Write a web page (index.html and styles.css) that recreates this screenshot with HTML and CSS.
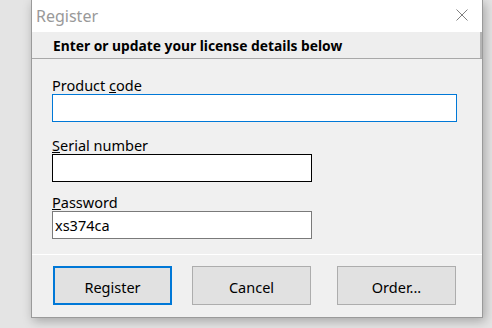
FILE: index.html
```html
<!DOCTYPE html>
<html lang="en">
<head>
    <meta charset="UTF-8">
    <title>Register</title>
    <link rel="stylesheet" href="styles.css">
</head>
<body>
    <div class="window">
        <div class="titlebar">
            <span class="title">Register</span>
            <svg class="close" width="12" height="12" viewBox="0 0 12 12">
                <path d="M0.5 0.5 L11.5 11.5 M11.5 0.5 L0.5 11.5" stroke="#808080" stroke-width="1" fill="none"/>
            </svg>
        </div>

        <div class="header">Enter or update your license details below</div>

        <div class="content">
            <div class="field field-product">
                <label for="productCode">Product <u>c</u>ode</label>
                <input type="text" id="productCode" class="focused">
            </div>
            <div class="field field-serial">
                <label for="serialNumber"><u>S</u>erial number</label>
                <input type="text" id="serialNumber" class="short dark">
            </div>
            <div class="field field-password">
                <label for="password"><u>P</u>assword</label>
                <input type="text" id="password" class="short" value="xs374ca">
            </div>
        </div>

        <div class="footer">
            <button class="default">Register</button>
            <button class="cancel">Cancel</button>
            <button class="order">Order...</button>
        </div>
    </div>
</body>
</html>
```

FILE: styles.css
```css
body {
    margin: 0;
    height: 328px;
    overflow: hidden;
    background-color: #e4e4e4;
    font-family: "Noto Sans", "Open Sans", sans-serif;
    color: #000;
}
.window {
    margin-left: 31px;
    width: 450px;
    height: 317px;
    border: 1px solid #9a9a9a;
    border-top: none;
    background-color: #f0f0f0;
    box-shadow: 2px 3px 10px rgba(0, 0, 0, 0.28);
}
.titlebar {
    height: 32px;
    background-color: #fff;
    display: flex;
    align-items: center;
    justify-content: space-between;
    padding: 0 14px 0 4px;
}
.title {
    font-size: 16px;
    color: #999;
    margin-top: -1px;
}
.close {
    display: block;
    margin-top: -2px;
}
.header {
    height: 26px;
    line-height: 27px;
    background-color: #eeeeee;
    border-bottom: 1px solid #a8a8a8;
    padding-left: 21px;
    font-size: 13.8px;
    font-weight: bold;
    box-shadow: inset -2px 0 0 #b5b5b5;
}
.content {
    height: 196px;
    padding: 0 24px 0 20px;
    border-bottom: 1px solid #fff;
    box-sizing: border-box;
}
.field label {
    display: block;
    height: 18px;
    line-height: 18px;
    font-size: 14.5px;
}
.field-product {
    padding-top: 17px;
}
.field-serial {
    margin-top: 14px;
}
.field-password {
    margin-top: 11px;
}
input[type="text"] {
    display: block;
    width: 405px;
    height: 28px;
    box-sizing: border-box;
    margin: 0;
    padding: 0 2px;
    border: 1px solid #7a7a7a;
    background-color: #fff;
    font-family: "Noto Sans", "Open Sans", sans-serif;
    font-size: 14.5px;
    color: #000;
    outline: none;
}
input.focused {
    border-color: #0078d7;
}
input.short {
    width: 260px;
}
input.dark {
    border-color: #000;
}
.footer {
    display: flex;
    padding: 11px 0 0 21px;
}
button {
    width: 119px;
    height: 39px;
    box-sizing: border-box;
    background-color: #e1e1e1;
    border: 1px solid #adadad;
    font-family: "Noto Sans", "Open Sans", sans-serif;
    font-size: 14.5px;
    color: #000;
    padding: 3px 0 0;
}
button.default {
    border: 2px solid #0078d7;
}
button.cancel {
    margin-left: 20px;
}
button.order {
    margin-left: 26px;
}
```
